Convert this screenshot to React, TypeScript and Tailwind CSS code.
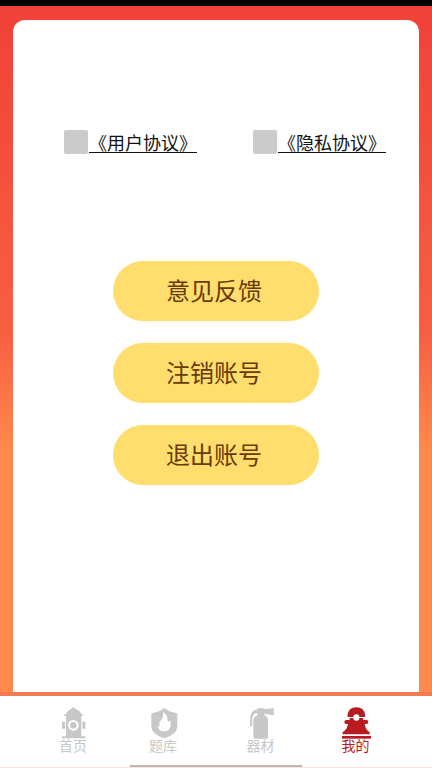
import React, { useState } from 'react';

interface Agreement {
  id: string;
  title: string;
}

interface TabItem {
  id: string;
  label: string;
  icon: React.ReactNode;
}

const agreements: Agreement[] = [
  { id: 'terms', title: '《用户协议》' },
  { id: 'privacy', title: '《隐私协议》' },
];

const actions = ['意见反馈', '注销账号', '退出账号'];

function HydrantIcon() {
  return (
    <svg viewBox="54 65 90 96" className="h-8 w-[30px]" fill="currentColor" aria-hidden="true">
      <path d="M97 67q3-2 6 0l4 4q13 5 17 15h4v6h-4v61h12v6H66v-6h12V92h-5v-6h4q4-10 16-15z" />
      <path d="M66 109h9v21h-9zM127 109h9v21h-9z" />
      <circle cx="100" cy="120" r="13" fill="none" stroke="white" strokeWidth="6" />
    </svg>
  );
}

function ShieldFlameIcon() {
  return (
    <svg viewBox="324 65 90 96" className="h-8 w-[30px]" fill="currentColor" aria-hidden="true">
      <path d="M373 68q16 13 39 16v37q0 26-39 38-39-12-39-38V84q23-3 39-16z" />
      <path
        d="M369 80q13 8 13 20 0 8 4 9 3 0 3-6 5 7 3 18-3 17-20 17-18 0-19-16 4 2 6 1-4-10 3-17 9-9 7-26z"
        fill="white"
      />
    </svg>
  );
}

function ExtinguisherIcon() {
  return (
    <svg viewBox="47 65 90 96" className="h-8 w-[30px]" fill="currentColor" aria-hidden="true">
      <path d="M80 72q0-3 4-3h18v3l28-4v22l-28-5v5q11 4 11 15v51q0 4-4 4H73q-4 0-4-4v-51q0-11 12-15v-6q-14 0-15 15l-1 23h-6l1-25q2-23 20-24z" />
    </svg>
  );
}

function FirefighterIcon() {
  return (
    <svg viewBox="333 65 90 96" className="h-8 w-[30px]" fill="currentColor" aria-hidden="true">
      <path d="M352 91q3-25 27-25t27 25q0 4-4 4H388a9 8 0 0 0-18 0H356q-4 0-4-4z" />
      <path d="M359 98h11a9 8 0 0 0 18 0h11v6h10q6 0 6 6t-6 6h-5q2 14 9 20 7 2 7 11H337q0-9 7-11 8-6 10-20h-5q-6 0-6-6t6-6h10z" />
      <path d="M336 152h87v8h-87z" />
    </svg>
  );
}

const tabs: TabItem[] = [
  { id: 'home', label: '首页', icon: <HydrantIcon /> },
  { id: 'questions', label: '题库', icon: <ShieldFlameIcon /> },
  { id: 'equipment', label: '器材', icon: <ExtinguisherIcon /> },
  { id: 'mine', label: '我的', icon: <FirefighterIcon /> },
];

export default function App() {
  const [activeTab, setActiveTab] = useState('mine');

  return (
    <div className="flex min-h-screen flex-col bg-white font-['Noto_Sans_CJK_SC',sans-serif]">
      {/* Status bar */}
      <div className="h-1.5 bg-black" />

      <main className="flex flex-1 flex-col bg-linear-to-b from-[#f04138] via-[#f75f42] via-48% to-[#ff8a4c] to-65% px-[13px] pt-3.5">
        <section className="flex-1 rounded-t-xl bg-white pt-[110px]">
          {/* Agreements */}
          <div className="flex justify-between pr-[33px] pl-[51px]">
            {agreements.map((item) => (
              <div key={item.id} className="flex items-center">
                <input
                  id={item.id}
                  type="checkbox"
                  className="h-6 w-6 appearance-none rounded-xs bg-[#cbcbcb] checked:bg-[#b81c22]"
                />
                <label htmlFor={item.id} className="pl-px text-lg leading-6 text-[#111]">
                  <a href={`#${item.id}`} className="underline underline-offset-2">
                    {item.title}
                  </a>
                </label>
              </div>
            ))}
          </div>

          {/* Account actions */}
          <div className="mt-[107px] flex flex-col items-center gap-[22px]">
            {actions.map((action) => (
              <button
                key={action}
                type="button"
                className="h-[60px] w-[206px] rounded-full bg-[#ffde6e] pr-1 pb-0.5 text-2xl text-[#6a3a06]"
              >
                {action}
              </button>
            ))}
          </div>
        </section>
      </main>

      {/* Tab bar */}
      <nav className="border-t-4 border-[#f17a50] bg-white">
        <div className="grid grid-cols-[90fr_90fr_105fr_85fr] pt-[11px] pr-[34px] pb-3.5 pl-7">
          {tabs.map((tab) => (
            <a
              key={tab.id}
              href={`#${tab.id}`}
              onClick={() => setActiveTab(tab.id)}
              className={`flex flex-col items-center ${
                activeTab === tab.id ? 'text-[#b81c22]' : 'text-[#c8c8c8]'
              }`}
            >
              {tab.icon}
              <span className="text-sm leading-3">{tab.label}</span>
            </a>
          ))}
        </div>
        <div className="mx-auto h-0.5 w-2/5 bg-[#bdb8b6]" />
        <div className="h-px bg-[#f8e4dd]" />
      </nav>
    </div>
  );
}
